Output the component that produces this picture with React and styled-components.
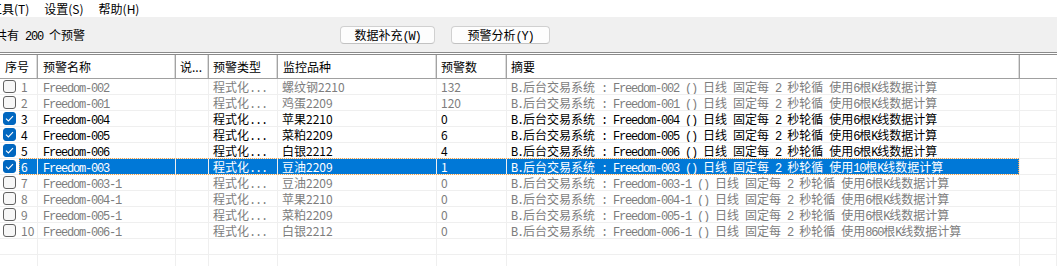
import React from "react";
import styled, { createGlobalStyle, css } from "styled-components";

const GlobalStyle = createGlobalStyle`
  html, body { margin: 0; padding: 0; background: #fff; overflow: hidden; }
  body {
    font-family: "Noto Sans CJK SC", "Noto Sans", sans-serif;
    font-size: 12px;
    color: #000;
  }
`;

// column widths taken from the header separators
const COLS = "38px 138px 33px 69px 159px 70px 513px 1fr";

const rows = [
  { no: 1, name: "Freedom-002", kind: "螺纹钢2210", count: "132", bars: 6 },
  { no: 2, name: "Freedom-001", kind: "鸡蛋2209", count: "120", bars: 6 },
  { no: 3, name: "Freedom-004", kind: "苹果2210", count: "0", bars: 6, on: true },
  { no: 4, name: "Freedom-005", kind: "菜粕2209", count: "6", bars: 6, on: true },
  { no: 5, name: "Freedom-006", kind: "白银2212", count: "4", bars: 6, on: true },
  { no: 6, name: "Freedom-003", kind: "豆油2209", count: "1", bars: 10, on: true, sel: true },
  { no: 7, name: "Freedom-003-1", kind: "豆油2209", count: "0", bars: 6 },
  { no: 8, name: "Freedom-004-1", kind: "苹果2210", count: "0", bars: 6 },
  { no: 9, name: "Freedom-005-1", kind: "菜粕2209", count: "0", bars: 6 },
  { no: 10, name: "Freedom-006-1", kind: "白银2212", count: "0", bars: 860 },
];

const Page = styled.div`
  width: 1057px;
  height: 266px;
  overflow: hidden;
`;

const MenuBar = styled.div`
  height: 17px;
  display: flex;
  align-items: center;
  gap: 15px;
  margin-left: -10px;
  line-height: 17px;
`;

const MenuItem = styled.span`
  white-space: nowrap;
`;

const Toolbar = styled.div`
  height: 35px;
  background: #f0f0f0;
  display: flex;
  align-items: center;
`;

const Count = styled.span`
  flex: 0 0 345px;
  margin-left: -5px;
  white-space: pre;
`;

const Buttons = styled.div`
  display: flex;
  gap: 16px;
`;

const Button = styled.button`
  width: ${(p) => p.$w}px;
  height: 18px;
  padding: 0;
  box-sizing: border-box;
  border: 1px solid #d0d0d0;
  border-bottom-color: #c2c2c2;
  border-radius: 4px;
  background: #fdfdfd;
  font-family: inherit;
  font-size: 12px;
  line-height: 16px;
  color: #000;
  white-space: pre;
`;

const Table = styled.div`
  border-top: 3px double #8a8a8a;
  background: #fff;
`;

const Grid = styled.div`
  display: grid;
  grid-template-columns: ${COLS};
`;

const Header = styled(Grid)`
  height: 23px;
  border-bottom: 1px solid #a0a0a0;
`;

const HeadCell = styled.div`
  padding-left: ${(p) => p.$pad ?? 4}px;
  line-height: 23px;
  white-space: nowrap;
  overflow: hidden;
  border-right: ${(p) => (p.$last ? "none" : "1px solid #a3a3a3")};
  box-shadow: ${(p) => (p.$last ? "none" : "inset -1px 0 0 #dcdcdc")};
`;

const Row = styled(Grid)`
  position: relative;
  height: 16px;
  color: ${(p) => (p.$on ? "#000" : "#7d7d7d")};
  ${(p) =>
    p.$sel &&
    css`
      color: #fff;
      &::after {
        content: "";
        position: absolute;
        left: 19px;
        right: 38px;
        top: -1px;
        bottom: 0;
        border: 1px dotted #f0a048;
        pointer-events: none;
      }
    `}
`;

const Cell = styled.div`
  box-sizing: border-box;
  height: 16px;
  padding-left: ${(p) => p.$pad ?? 4}px;
  line-height: 15px;
  white-space: pre;
  overflow: hidden;
  border-right: 1px solid #efefef;
  border-bottom: 1px solid #efefef;
  background: ${(p) => (p.$sel ? "#0078d7" : "transparent")};
`;

const FirstCell = styled.div`
  display: flex;
  align-items: flex-start;
  height: 16px;
  box-sizing: border-box;
  padding-left: 3px;
  border-right: 1px solid #efefef;
  border-bottom: 1px solid #efefef;
`;

const Check = styled.span`
  flex: 0 0 13px;
  height: 13px;
  margin-top: 1px;
  box-sizing: border-box;
  border-radius: 3px;
  border: 1px solid ${(p) => (p.$on ? "#0067c0" : "#616161")};
  background: ${(p) => (p.$on ? "#0067c0" : "#f7f7f7")};
  display: flex;
  align-items: center;
  justify-content: center;
`;

const Num = styled.span`
  flex: 1;
  margin-left: 3px;
  padding-left: 2px;
  height: 15px;
  line-height: 15px;
  background: ${(p) => (p.$sel ? "#0078d7" : "transparent")};
`;

const Latin = styled.span`
  font-family: "Liberation Mono", "DejaVu Sans Mono", monospace;
  font-size: 12px;
  letter-spacing: -1.2px;
`;

// ASCII runs in a 6px-wide mono face, CJK at full 12px
function Mono({ text }) {
  return text
    .split(/([\x20-\x7e]+)/)
    .filter(Boolean)
    .map((part, i) =>
      /^[\x20-\x7e]+$/.test(part) ? <Latin key={i}>{part}</Latin> : <React.Fragment key={i}>{part}</React.Fragment>
    );
}

function CheckMark() {
  return (
    <svg width="9" height="7" viewBox="0 0 9 7">
      <path d="M1 3.6 L3.4 6 L8 1.2" fill="none" stroke="#fff" strokeWidth="1.1" />
    </svg>
  );
}

function EmptyRow() {
  return (
    <Row>
      <FirstCell />
      {Array.from({ length: 7 }).map((_, i) => (
        <Cell key={i} />
      ))}
    </Row>
  );
}

export default function App() {
  return (
    <Page>
      <GlobalStyle />
      <MenuBar>
        <MenuItem>工具(T)</MenuItem>
        <MenuItem>设置(S)</MenuItem>
        <MenuItem>帮助(H)</MenuItem>
      </MenuBar>
      <Toolbar>
        <Count>
          <Mono text="共有 200 个预警" />
        </Count>
        <Buttons>
          <Button $w={95}>
            <Mono text="数据补充(W)" />
          </Button>
          <Button $w={99}>
            <Mono text="预警分析(Y)" />
          </Button>
        </Buttons>
      </Toolbar>
      <Table>
        <Header>
          <HeadCell $pad={5}>序号</HeadCell>
          <HeadCell $pad={5}>预警名称</HeadCell>
          <HeadCell>说...</HeadCell>
          <HeadCell>预警类型</HeadCell>
          <HeadCell $pad={5}>监控品种</HeadCell>
          <HeadCell>预警数</HeadCell>
          <HeadCell>摘要</HeadCell>
          <HeadCell $last />
        </Header>
        {rows.map((r) => (
          <Row key={r.no} $on={r.on} $sel={r.sel}>
            <FirstCell>
              <Check $on={r.on}>{r.on && <CheckMark />}</Check>
              <Num $sel={r.sel}>{r.no}</Num>
            </FirstCell>
            <Cell $sel={r.sel} $pad={5}>
              <Mono text={r.name} />
            </Cell>
            <Cell $sel={r.sel} />
            <Cell $sel={r.sel}>
              程式化<Latin>...</Latin>
            </Cell>
            <Cell $sel={r.sel}>{r.kind}</Cell>
            <Cell $sel={r.sel}>{r.count}</Cell>
            <Cell $sel={r.sel}>
              <Mono text={`B.后台交易系统 : ${r.name} () 日线 固定每 2 秒轮循 使用${r.bars}根K线数据计算`} />
            </Cell>
            <Cell />
          </Row>
        ))}
        <EmptyRow />
        <EmptyRow />
      </Table>
    </Page>
  );
}
